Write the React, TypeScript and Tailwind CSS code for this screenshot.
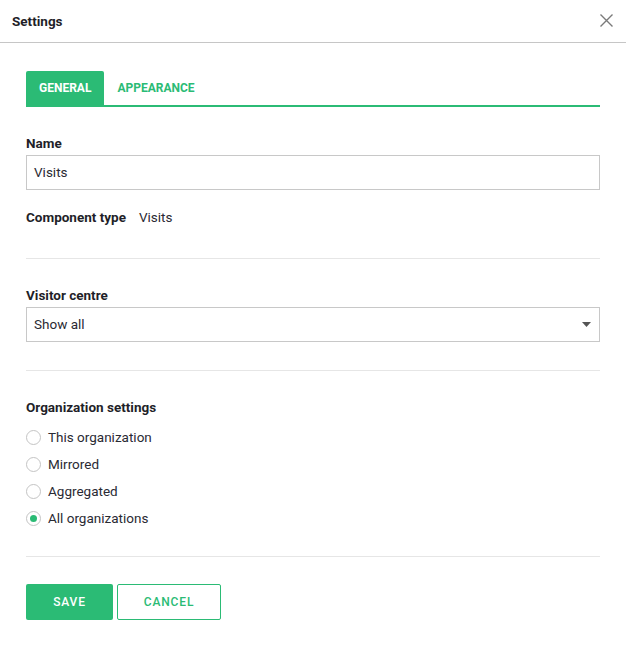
const orgOptions = [
  { id: 'this', label: 'This organization' },
  { id: 'mirrored', label: 'Mirrored' },
  { id: 'aggregated', label: 'Aggregated' },
  { id: 'all', label: 'All organizations' },
];

function Radio({ label, checked }: { label: string; checked?: boolean }) {
  return (
    <label className="flex h-[27px] items-center gap-[7px]">
      <span className="flex h-[15px] w-[15px] items-center justify-center rounded-full border border-[#c4c4c4] bg-white">
        {checked && <span className="h-[7px] w-[7px] rounded-full bg-[#2bbb75]" />}
      </span>
      <span className="text-[13.5px] text-[#2a2a33]">{label}</span>
    </label>
  );
}

export default function App() {
  return (
    <div
      className="h-[645px] w-[626px] bg-white text-[#1f1f29]"
      style={{ fontFamily: 'Roboto, "Liberation Sans", sans-serif' }}
    >
      {/* Header */}
      <div className="flex h-[43px] items-center justify-between border-b border-[#c6c6c6] pl-3 pr-[13px]">
        <span className="text-[13.5px] font-bold">Settings</span>
        <svg width="13" height="13" viewBox="0 0 13 13" className="mb-[2px]">
          <path d="M0.5 0.5L12.5 12.5M12.5 0.5L0.5 12.5" stroke="#7a7a7a" strokeWidth="1.4" />
        </svg>
      </div>

      <div className="px-[26px]">
        {/* Tabs */}
        <div className="mt-[28px] flex h-[36px] border-b-2 border-[#2bbb75]">
          <div className="flex items-center rounded-t-[2px] bg-[#2bbb75] px-[13px] text-[12px] font-bold text-white">
            GENERAL
          </div>
          <div className="flex items-center px-[13px] text-[12px] font-bold text-[#2bbb75]">APPEARANCE</div>
        </div>

        {/* Name */}
        <div className="mt-[28px] text-[13.5px] font-bold leading-4">Name</div>
        <div className="mt-[4px] flex h-[35px] items-center border border-[#c8c8c8] px-[7px] text-[13.5px] text-[#2a2a33]">
          Visits
        </div>
        <div className="mt-[19px] flex items-center text-[13.5px] leading-4">
          <span className="font-bold">Component type</span>
          <span className="ml-[13px] text-[#2a2a33]">Visits</span>
        </div>

        <div className="mt-[33px] border-t border-[#e6e6e6]" />

        {/* Visitor centre */}
        <div className="mt-[28px] text-[13.5px] font-bold leading-4">Visitor centre</div>
        <div className="mt-[4px] flex h-[35px] items-center justify-between border border-[#c8c8c8] pl-[7px] pr-[8px] text-[13.5px] text-[#2a2a33]">
          <span>Show all</span>
          <svg width="9" height="5" viewBox="0 0 9 5">
            <path d="M0 0h9L4.5 5z" fill="#555" />
          </svg>
        </div>

        <div className="mt-[28px] border-t border-[#e6e6e6]" />

        {/* Organization settings */}
        <div className="mt-[28px] text-[13.5px] font-bold leading-4">Organization settings</div>
        <div className="mt-[9px] flex flex-col">
          {orgOptions.map((o) => (
            <Radio key={o.id} label={o.label} checked={o.id === 'all'} />
          ))}
        </div>

        <div className="mt-[24px] border-t border-[#e6e6e6]" />

        {/* Actions */}
        <div className="mt-[27px] flex gap-[4px]">
          <button className="h-[36px] w-[87px] rounded-[2px] bg-[#2bbb75] text-[12px] font-medium tracking-[0.07em] text-white">
            SAVE
          </button>
          <button className="h-[36px] w-[104px] rounded-[2px] border border-[#2bbb75] bg-white text-[12px] font-medium tracking-[0.07em] text-[#2bbb75]">
            CANCEL
          </button>
        </div>
      </div>
    </div>
  );
}
